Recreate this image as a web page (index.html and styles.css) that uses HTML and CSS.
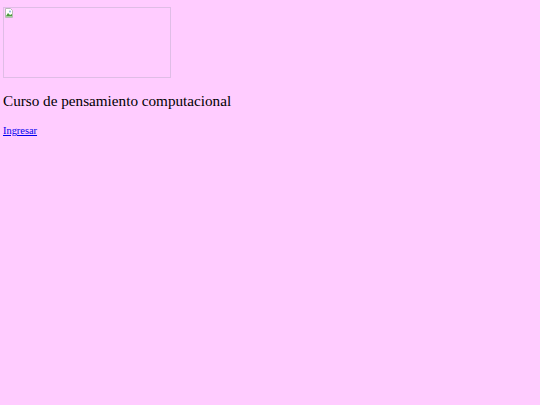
FILE: index.html
```html
<!DOCTYPE html>
<html lang="es">
<head>
<meta charset="utf-8">
<title>Curso de pensamiento computacional</title>
<link rel="stylesheet" href="styles.css">
</head>
<body>
<div class="banner" role="img" aria-label="logo">
<svg class="broken" width="10" height="10" viewBox="0 0 10 10"><path d="M1.5 0.5h5l2 2v7h-7z" fill="#fff" stroke="#b8b8b8" stroke-width="1"/><path d="M2 8l2-3 2 2 2-1v2.5h-6z" fill="#4a9a3c"/><circle cx="6" cy="3.5" r="1" fill="#8ab8e0"/></svg>
</div>
<h2 class="title">Curso de pensamiento computacional</h2>
<a class="enter" href="#">Ingresar</a>
</body>
</html>
```
FILE: styles.css
```css
html, body {
  margin: 0;
  background: #ffccff;
}
body {
  padding: 7px 3px;
  font-family: "Liberation Serif", "Times New Roman", serif;
  font-size: 10.4px;
  color: #000;
}
.banner {
  width: 168px;
  height: 71px;
  box-sizing: border-box;
  border: 1px solid #dfbde6;
  padding: 0;
}
.broken {
  display: block;
}
.title {
  font-weight: normal;
  font-size: 15.2px;
  line-height: 18px;
  margin: 14px 0 15px;
}
.enter {
  color: #0000ee;
  text-decoration: underline;
}
```
